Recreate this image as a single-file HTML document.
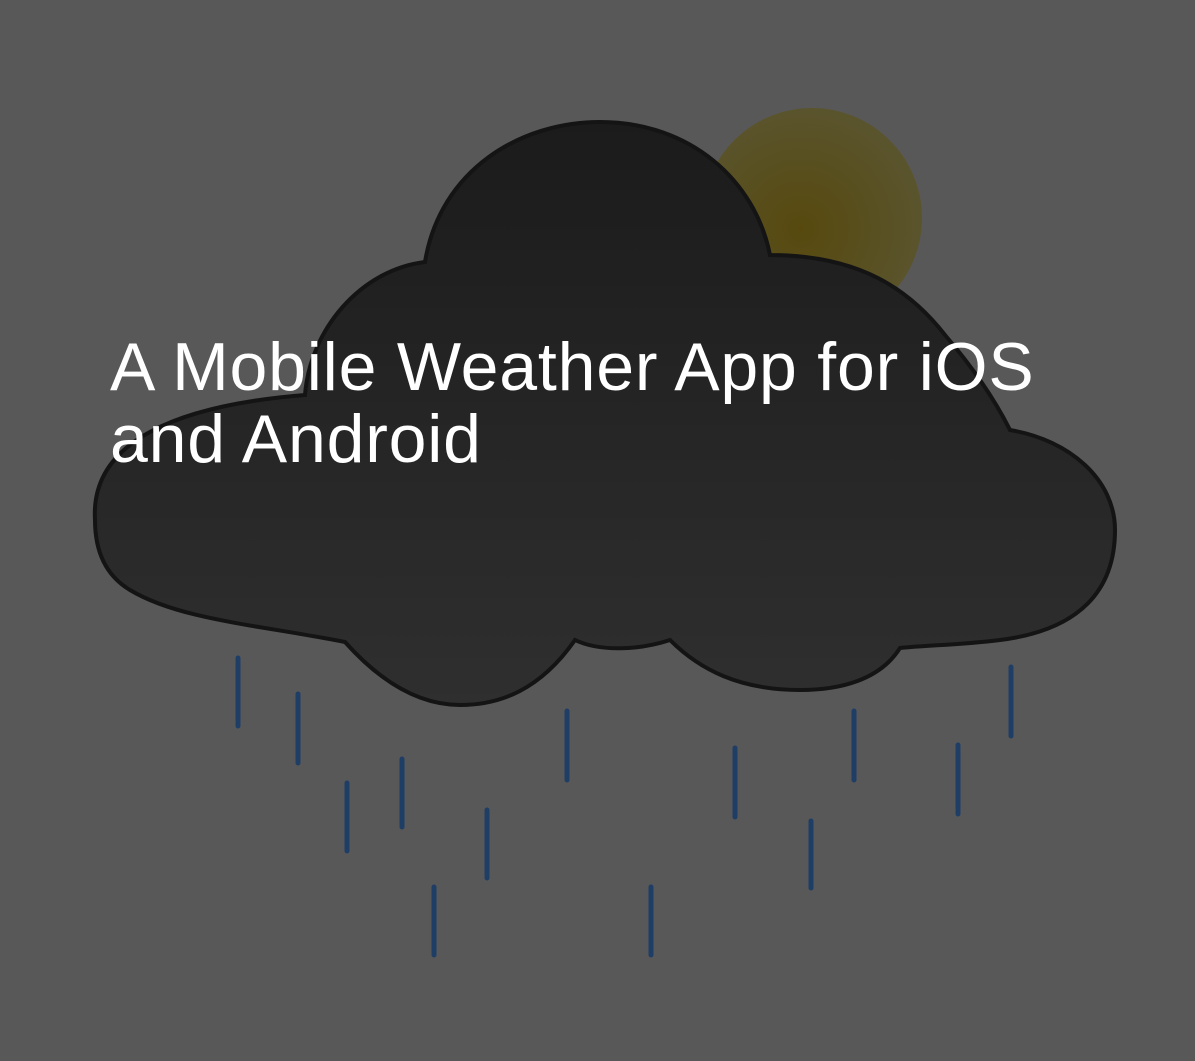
<!DOCTYPE html>
<html><head><meta charset="utf-8"><style>
html,body{margin:0;padding:0;background:#585858;width:1195px;height:1061px;overflow:hidden}
svg{position:absolute;left:0;top:0}
h1{position:absolute;left:110px;top:331px;margin:0;font:normal 68px/72px "Liberation Sans",Arial,sans-serif;color:#fff;letter-spacing:0.8px;width:1000px}
</style></head><body>
<svg width="1195" height="1061" viewBox="0 0 1195 1061">
<defs>
<radialGradient id="sun" cx="0.45" cy="0.55" r="0.6"><stop offset="0" stop-color="#57490e"/><stop offset="1" stop-color="#5a5530"/></radialGradient>
<linearGradient id="cl" x1="0" y1="0" x2="0" y2="1"><stop offset="0" stop-color="#1b1b1b"/><stop offset="1" stop-color="#2f2f2f"/></linearGradient>
</defs>
<circle cx="812" cy="218" r="110" fill="url(#sun)"/>
<path d="M95,520 C90,440 180,405 305,395 C310,330 360,270 425,262 C440,170 520,122 600,122 C690,122 755,180 770,255 C860,255 910,290 945,335 C975,370 995,400 1010,430 C1070,440 1115,480 1115,530 C1115,590 1080,630 1000,640 C960,645 930,645 900,648 C880,680 840,690 800,690 C740,690 700,670 670,640 C640,650 600,652 575,640 C540,690 500,705 460,705 C410,705 370,670 345,642 C260,625 180,620 130,590 C105,575 95,550 95,520 Z" fill="url(#cl)" stroke="#141414" stroke-width="4"/>
<g stroke="#1f3e66" stroke-width="5" stroke-linecap="round">
<line x1="238" y1="658" x2="238" y2="726"/>
<line x1="298" y1="694" x2="298" y2="763"/>
<line x1="347" y1="783" x2="347" y2="851"/>
<line x1="402" y1="759" x2="402" y2="827"/>
<line x1="487" y1="810" x2="487" y2="878"/>
<line x1="434" y1="887" x2="434" y2="955"/>
<line x1="567" y1="711" x2="567" y2="780"/>
<line x1="651" y1="887" x2="651" y2="955"/>
<line x1="735" y1="748" x2="735" y2="817"/>
<line x1="811" y1="821" x2="811" y2="888"/>
<line x1="854" y1="711" x2="854" y2="780"/>
<line x1="958" y1="745" x2="958" y2="814"/>
<line x1="1011" y1="667" x2="1011" y2="736"/>
</g>
</svg>
<h1>A Mobile Weather App for iOS and Android</h1>
</body></html>
